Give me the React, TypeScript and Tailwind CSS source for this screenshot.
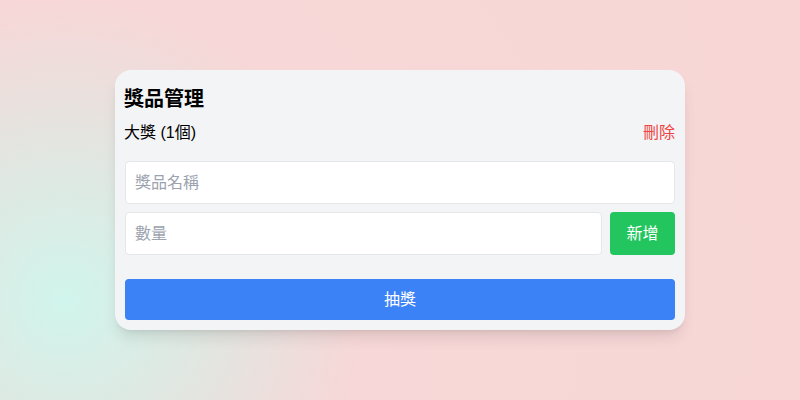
import { useState } from "react";

export default function App() {
  const [name, setName] = useState("");
  const [qty, setQty] = useState("");

  return (
    <div
      className="w-[800px] h-[400px] flex items-center justify-center bg-[radial-gradient(circle_at_65px_300px,#d0f5ec_0px,#e2e6e1_150px,#f7d7d7_300px,#f8d6d6_100%)]"
      style={{ fontFamily: '"Liberation Sans", "Noto Sans CJK TC", sans-serif' }}
    >
      <div className="w-[570px] rounded-2xl bg-[#f3f4f6] shadow-lg pt-[15px] px-[10px] pb-[10px]">
        <h2 className="text-xl font-bold text-black leading-7 mb-2 -ml-[1px]">獎品管理</h2>
        <div className="flex items-center justify-between mb-4 leading-6">
          <span className="text-base text-black -ml-[1px]">大獎 (1個)</span>
          <button className="text-base text-[#ef4444]">刪除</button>
        </div>
        <input
          value={name}
          onChange={(e) => setName(e.target.value)}
          placeholder="獎品名稱"
          className="block w-full h-[43px] px-[9px] bg-white border border-[#e5e7eb] rounded text-base placeholder:text-[#9ca3af] outline-none mb-2"
        />
        <div className="flex gap-2 mb-6">
          <input
            value={qty}
            onChange={(e) => setQty(e.target.value)}
            placeholder="數量"
            className="flex-1 min-w-0 h-[43px] px-[9px] bg-white border border-[#e5e7eb] rounded text-base placeholder:text-[#9ca3af] outline-none"
          />
          <button className="w-[65px] h-[43px] rounded bg-[#22c55e] text-white text-base">新增</button>
        </div>
        <button className="w-full h-[41px] rounded bg-[#3b82f6] text-white text-base">抽獎</button>
      </div>
    </div>
  );
}
